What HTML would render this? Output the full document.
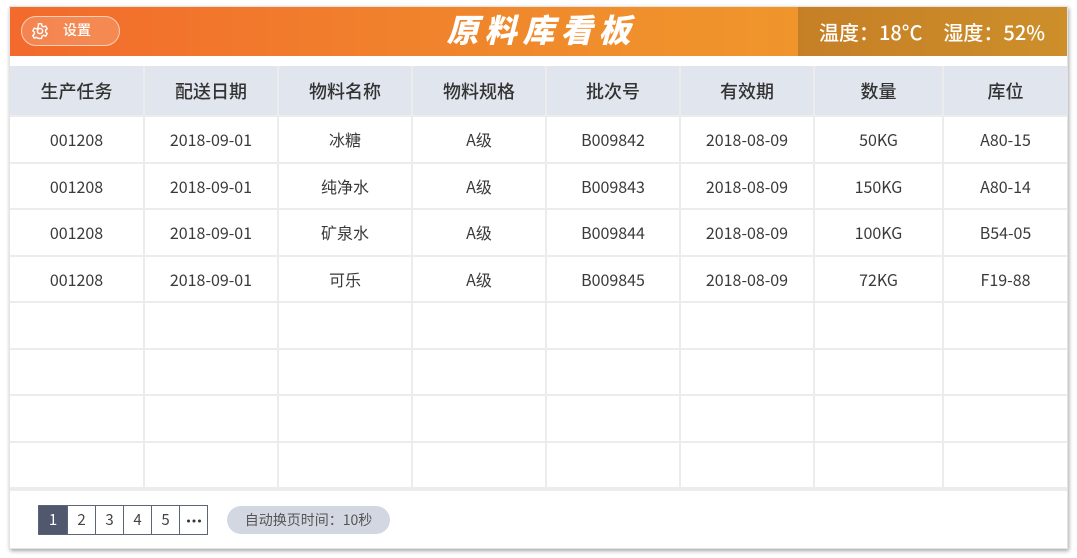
<!DOCTYPE html>
<html><head><meta charset="utf-8"><style>
*{margin:0;padding:0;box-sizing:border-box}
body{width:1077px;height:558px;background:#fff;font-family:"Noto Sans CJK SC","Liberation Sans",sans-serif;position:relative;overflow:hidden}
.card{position:absolute;left:9px;top:6px;width:1059px;height:543px;border:1px solid #e4e4e4;box-shadow:1px 2px 4px rgba(0,0,0,.35);background:#fff}
.hdr{position:absolute;left:10px;top:7px;width:1057px;height:49px;background:linear-gradient(90deg,#f26a2c,#f0902c 60%,#ee9e2c)}
.env{position:absolute;left:798px;top:7px;width:269px;height:49px;background:linear-gradient(90deg,#c67f26,#cd8f2a);color:#fff;font-size:20px;font-weight:500;line-height:49px;padding-left:21px;white-space:pre}
.title{position:absolute;left:0;width:1077px;top:5px;line-height:49px;text-align:center;color:#fff;font-size:32px;font-weight:900;font-style:italic;letter-spacing:6px;padding-left:6px}
.set{position:absolute;left:21px;top:16px;width:99px;height:30px;border:1.5px solid #fbd0b8;border-radius:15px;background:rgba(255,255,255,.18);color:#fff;font-size:14px;font-weight:500;line-height:27px;padding-left:41px}
.set svg{position:absolute;left:8px;top:4px}
table{position:absolute;left:10px;top:66px;border-collapse:collapse;table-layout:fixed;width:1057px}
td,th{text-align:center;color:#3a3a3a;font-size:16px;font-weight:normal;border:2px solid #ececec}
th{background:#e0e5ee;height:50px;font-size:18px;font-weight:500;color:#333;border-top:none;border-color:#ececec}
td{height:46.5px}
tr td:first-child,tr th:first-child{border-left:none}
tr td:last-child,tr th:last-child{border-right:none}
.band{position:absolute;left:10px;top:487px;width:1057px;height:4px;background:#ececec}
.pg{position:absolute;left:38px;top:505px;display:flex;border:1px solid #5c6478}
.pg div{width:28px;height:28px;line-height:27px;text-align:center;font-size:15px;color:#444;border-left:1px solid #5c6478;overflow:hidden}
.pg div:first-child{border-left:none;background:#4f586c;color:#fff}
.pill{position:absolute;left:227px;top:506px;width:163px;height:28px;border-radius:14px;background:#d3d7e2;color:#555;font-size:14px;line-height:28px;text-align:center}
</style></head><body>
<div class="card"></div>
<div class="hdr"></div>
<div class="env">温度：18°C<span style="display:inline-block;width:21px"></span>湿度：52%</div>
<div class="title">原料库看板</div>
<div class="set"><svg width="20" height="20" viewBox="0 0 20 20" fill="none" stroke="#fff" stroke-width="1.4"><path d="M8.5 2h3l.5 2.2 1.6.9 2.1-.8 1.5 2.6-1.6 1.5v1.8l1.6 1.5-1.5 2.6-2.1-.8-1.6.9-.5 2.2h-3L8 16.4l-1.6-.9-2.1.8-1.5-2.6 1.6-1.5V10.4L2.8 8.9l1.5-2.6 2.1.8L8 6.2z" transform="translate(0,0.8)"/><circle cx="10" cy="10" r="2.6"/></svg>设置</div>
<table>
<colgroup><col style="width:134px"><col style="width:134px"><col style="width:134px"><col style="width:134px"><col style="width:134px"><col style="width:134px"><col style="width:129px"><col style="width:124px"></colgroup>
<tr><th>生产任务</th><th>配送日期</th><th>物料名称</th><th>物料规格</th><th>批次号</th><th>有效期</th><th>数量</th><th>库位</th></tr>
<tr><td>001208</td><td>2018-09-01</td><td>冰糖</td><td>A级</td><td>B009842</td><td>2018-08-09</td><td>50KG</td><td>A80-15</td></tr>
<tr><td>001208</td><td>2018-09-01</td><td>纯净水</td><td>A级</td><td>B009843</td><td>2018-08-09</td><td>150KG</td><td>A80-14</td></tr>
<tr><td>001208</td><td>2018-09-01</td><td>矿泉水</td><td>A级</td><td>B009844</td><td>2018-08-09</td><td>100KG</td><td>B54-05</td></tr>
<tr><td>001208</td><td>2018-09-01</td><td>可乐</td><td>A级</td><td>B009845</td><td>2018-08-09</td><td>72KG</td><td>F19-88</td></tr>
<tr><td></td><td></td><td></td><td></td><td></td><td></td><td></td><td></td></tr>
<tr><td></td><td></td><td></td><td></td><td></td><td></td><td></td><td></td></tr>
<tr><td></td><td></td><td></td><td></td><td></td><td></td><td></td><td></td></tr>
<tr><td></td><td></td><td></td><td></td><td></td><td></td><td></td><td></td></tr>
</table>
<div class="band"></div>
<div class="pg"><div>1</div><div>2</div><div>3</div><div>4</div><div>5</div><div><svg width="16" height="4" viewBox="0 0 16 4" style="vertical-align:middle"><circle cx="2.5" cy="2" r="1.5" fill="#333"/><circle cx="8" cy="2" r="1.5" fill="#333"/><circle cx="13.5" cy="2" r="1.5" fill="#333"/></svg></div></div>
<div class="pill">自动换页时间：10秒</div>
</body></html>
